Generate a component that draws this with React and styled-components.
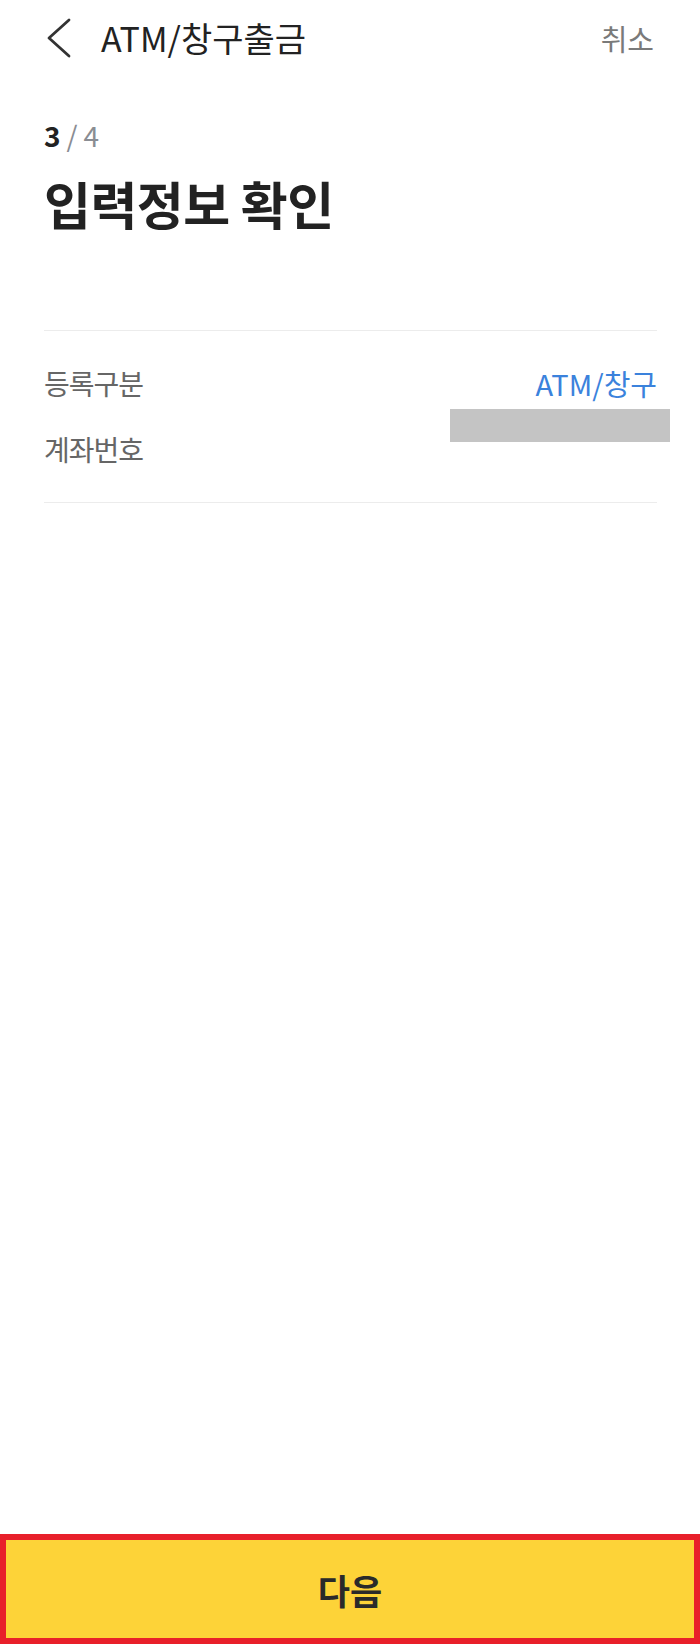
import React from "react";
import styled, { createGlobalStyle } from "styled-components";

const GlobalStyle = createGlobalStyle`
  html, body {
    margin: 0;
    padding: 0;
    background: #ffffff;
  }
  body {
    font-family: "Noto Sans CJK KR", "Noto Sans", sans-serif;
    color: #222222;
  }
`;

const Page = styled.div`
  width: 700px;
  height: 100vh;
  display: flex;
  flex-direction: column;
  background: #ffffff;
`;

const Header = styled.header`
  height: 76px;
  display: flex;
  align-items: center;
  padding: 0 46px 0 46px;
`;

const BackButton = styled.button`
  background: none;
  border: none;
  padding: 0;
  width: 26px;
  height: 40px;
  display: flex;
  align-items: center;
  cursor: pointer;
`;

const HeaderTitle = styled.h1`
  margin: 0 0 0 29px;
  flex: 1;
  font-size: 34px;
  font-weight: 400;
  color: #222222;
  line-height: 42px;
`;

const CancelButton = styled.button`
  background: none;
  border: none;
  padding: 0;
  font-family: inherit;
  font-size: 29px;
  color: #7a7a7a;
  line-height: 42px;
  cursor: pointer;
`;

const Content = styled.main`
  padding: 0 43px 0 44px;
`;

const Step = styled.div`
  margin-top: 43px;
  font-size: 28px;
  line-height: 32px;
  font-weight: 700;
  color: #222222;
`;

const StepTotal = styled.span`
  font-weight: 400;
  color: #8a8d93;
  margin-left: ${(p) => p.gap || 0}px;
`;

const Title = styled.h2`
  margin: 21px 0 0;
  font-size: 51px;
  line-height: 62px;
  font-weight: 700;
  color: #222222;
  letter-spacing: -0.5px;
`;

const InfoList = styled.dl`
  margin: 96px 0 0;
  padding: 19px 0 20px;
  border-top: 1px solid #ececec;
  border-bottom: 1px solid #ececec;
`;

const InfoRow = styled.div`
  position: relative;
  height: 66px;
  display: flex;
  align-items: center;
  justify-content: space-between;
`;

const Label = styled.dt`
  font-size: 28px;
  color: #666666;
  letter-spacing: -1px;
`;

const Value = styled.dd`
  margin: 0;
  font-size: 29px;
  color: ${(p) => (p.accent ? "#3b82dc" : "#222222")};
`;

const Mask = styled.div`
  position: absolute;
  top: -7px;
  right: -13px;
  width: 220px;
  height: 33px;
  background: #c4c4c4;
`;

const Spacer = styled.div`
  flex: 1;
`;

const NextButton = styled.button`
  height: 110px;
  width: 100%;
  box-sizing: border-box;
  border: 6px solid #e8202a;
  background: #fdd338;
  font-family: inherit;
  font-size: 35px;
  font-weight: 700;
  color: #2a2a2a;
  cursor: pointer;
`;

const ChevronLeft = () => (
  <svg width="26" height="40" viewBox="0 0 26 40" fill="none">
    <path
      d="M23 2 L3 20 L23 38"
      stroke="#333333"
      strokeWidth="2.8"
      strokeLinecap="round"
      strokeLinejoin="round"
    />
  </svg>
);

export default function App() {
  return (
    <Page>
      <GlobalStyle />
      <Header>
        <BackButton aria-label="뒤로">
          <ChevronLeft />
        </BackButton>
        <HeaderTitle>ATM/창구출금</HeaderTitle>
        <CancelButton>취소</CancelButton>
      </Header>
      <Content>
        <Step>
          3<StepTotal gap={6}>/</StepTotal>
          <StepTotal gap={6}>4</StepTotal>
        </Step>
        <Title>입력정보 확인</Title>
        <InfoList>
          <InfoRow>
            <Label>등록구분</Label>
            <Value accent>ATM/창구</Value>
          </InfoRow>
          <InfoRow>
            <Label>계좌번호</Label>
            <Mask />
          </InfoRow>
        </InfoList>
      </Content>
      <Spacer />
      <NextButton>다음</NextButton>
    </Page>
  );
}
